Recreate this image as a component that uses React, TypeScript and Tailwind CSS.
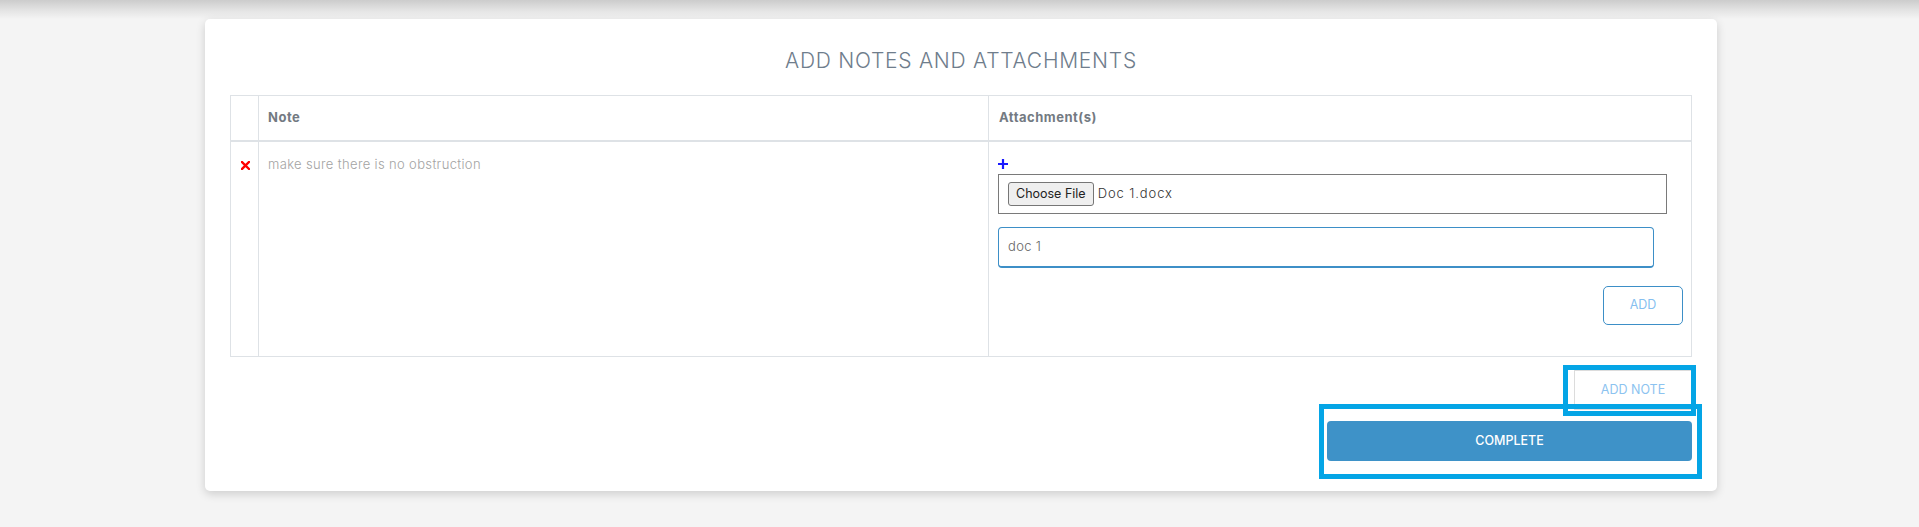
import React from "react";

function RedX() {
  return (
    <svg width="9" height="9" viewBox="0 0 9 9" className="block">
      <path d="M1 1 L8 8 M8 1 L1 8" stroke="#ff0000" strokeWidth="2.4" strokeLinecap="square" />
    </svg>
  );
}

function BluePlus() {
  return (
    <svg width="10" height="10" viewBox="0 0 10 10" className="block">
      <path d="M5 0 V10 M0 5 H10" stroke="#1a1aff" strokeWidth="2.2" />
    </svg>
  );
}

export default function App() {
  return (
    <div className="min-h-[527px] bg-[#f4f4f4] font-['Inter',sans-serif]">
      <div className="h-[19px] bg-gradient-to-b from-[#cccccc] via-[#e2e2e2] to-[#f4f4f4]" />
      <div className="ml-[205px] w-[1512px] rounded-[5px] bg-white px-[25px] pt-[28px] pb-[30px] shadow-[0_3px_10px_rgba(0,0,0,0.16)]">
        <h1 className="mb-[20px] h-[28px] text-center text-[21px] leading-[28px] font-light tracking-[0.75px] text-[#6f7d8c]">
          ADD NOTES AND ATTACHMENTS
        </h1>

        <div className="border border-[#dee2e6]">
          <div className="grid grid-cols-[27px_730px_1fr] border-b-2 border-[#dee2e6]">
            <div className="h-[44px]" />
            <div className="flex h-[44px] items-center border-l border-[#dee2e6] pl-[9px] text-[13px] font-bold tracking-[0.5px] text-[#737a82]">
              Note
            </div>
            <div className="flex h-[44px] items-center border-l border-[#dee2e6] pl-[10px] text-[13px] font-bold tracking-[0.5px] text-[#737a82]">
              Attachment(s)
            </div>
          </div>
          <div className="grid grid-cols-[27px_730px_1fr]">
            <div className="flex justify-center pt-[19px] pl-[1px]">
              <RedX />
            </div>
            <div className="border-l border-[#dee2e6] pt-[12px] pl-[9px]">
              <div className="h-[20px] text-[13px] leading-[20px] font-light tracking-[0.35px] text-[#a3a3a3]">
                make sure there is no obstruction
              </div>
            </div>
            <div className="border-l border-[#dee2e6] pt-[12px] pr-[8px] pb-[31px] pl-[9px]">
              <div className="flex h-[20px] items-center">
                <BluePlus />
              </div>
              <div className="flex h-[40px] w-[669px] items-center border border-[#7a7a7a] pl-[9px]">
                <span className="flex h-[24px] items-center rounded-[3px] border border-[#767676] bg-[#efefef] px-[7px] text-[12.5px] text-[#222]">
                  Choose File
                </span>
                <span className="ml-[4px] text-[13px] font-light tracking-[0.9px] text-[#333]">Doc 1.docx</span>
              </div>
              <div className="mt-[13px] flex h-[41px] w-[656px] items-center rounded-[4px] border border-b-2 border-[#3d8fc7] pl-[9px] text-[13px] font-light tracking-[0.3px] text-[#666]">
                doc 1
              </div>
              <div className="mt-[18px] flex justify-end">
                <button className="flex h-[39px] w-[80px] items-center justify-center rounded-[5px] border border-[#3d8fc7] bg-white text-[12.5px] text-[#86bff0]">
                  ADD
                </button>
              </div>
            </div>
          </div>
        </div>

        <div className="mt-[13px] flex flex-col items-end">
          <div className="relative">
            <button className="flex h-[40px] w-[118px] items-center justify-center border border-[#dcdcdc] bg-white text-[12.5px] text-[#8cc3f0]">
              ADD NOTE
            </button>
            <div className="pointer-events-none absolute top-[-5px] left-[-11px] h-[51px] w-[133px] border-[5px] border-[#04a5e6]" />
          </div>
          <div className="relative mt-[11px]">
            <button className="flex h-[40px] w-[365px] items-center justify-center rounded-[4px] bg-[#3e92c8] text-[12.5px] font-medium text-white">
              COMPLETE
            </button>
            <div className="pointer-events-none absolute top-[-17px] left-[-8px] h-[75px] w-[383px] border-[5px] border-[#04a5e6]" />
          </div>
        </div>
      </div>
    </div>
  );
}
